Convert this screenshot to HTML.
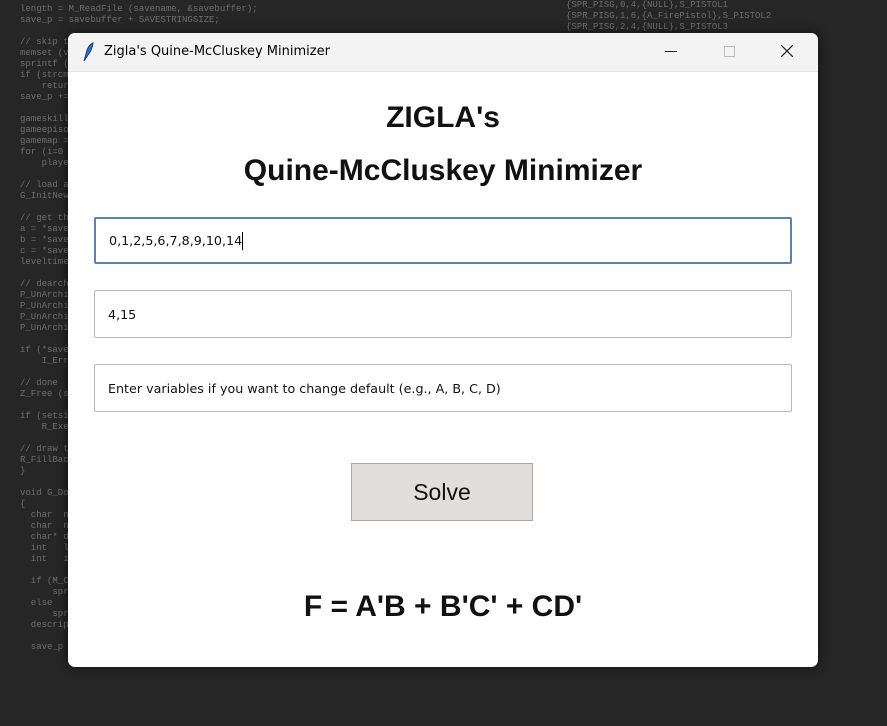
<!DOCTYPE html>
<html><head><meta charset="utf-8"><style>
body{margin:0;width:887px;height:726px;overflow:hidden;background:#262626;font-family:"Liberation Sans",sans-serif;position:relative}
.bg{position:absolute;font-family:"Liberation Mono",monospace;font-size:9px;color:#6e6e6e;line-height:11px;white-space:pre}
.win{position:absolute;left:68px;top:33px;width:750px;height:634px;background:#fff;border-radius:7px;overflow:hidden;box-shadow:0 0 10px rgba(0,0,0,.6);font-family:"Liberation Sans",sans-serif}
.tb{position:absolute;left:0;top:0;width:750px;height:38px;background:#f3f3f3;border-bottom:1px solid #e5e5e5}
.tt{position:absolute;left:36px;top:11px;color:#000;font-family:"DejaVu Sans",sans-serif;font-size:13px}
.h{position:absolute;left:0;width:100%;text-align:center;font-weight:bold;font-size:30px;color:#111;font-family:"Liberation Sans",sans-serif}
.in{position:absolute;left:26px;width:698px;background:#fff;border:1px solid #b8b8b8;border-radius:2px;color:#111;padding-left:13px;box-sizing:border-box;display:flex;align-items:center;font-family:"DejaVu Sans",sans-serif;font-size:12.7px}
.btn{position:absolute;left:283px;top:430px;width:182px;height:58px;background:#e1dfdb;border:1px solid #a9a9a9;box-sizing:border-box;text-align:center;line-height:56px;font-size:23px;color:#111;font-family:"Liberation Sans",sans-serif}
</style></head><body>
<div class="bg" style="left:20px;top:4px">length = M_ReadFile (savename, &amp;savebuffer);
save_p = savebuffer + SAVESTRINGSIZE;

// skip the description field
memset (vcheck,0,sizeof(vcheck));
sprintf (vcheck,"version %i",VERSION);
if (strcmp (save_p, vcheck))
    return;
save_p += VERSIONSIZE;

gameskill = *save_p++;
gameepisode = *save_p++;
gamemap = *save_p++;
for (i=0 ; i&lt;MAXPLAYERS ; i++)
    playeringame[i] = *save_p++;

// load a base level
G_InitNew (gameskill, gameepisode, gamemap);

// get the times
a = *save_p++;
b = *save_p++;
c = *save_p++;
leveltime = (a&lt;&lt;16) + (b&lt;&lt;8) + c;

// dearchive all the modifications
P_UnArchivePlayers ();
P_UnArchiveWorld ();
P_UnArchiveThinkers ();
P_UnArchiveSpecials ();

if (*save_p != 0x1d)
    I_Error ("Bad savegame");

// done
Z_Free (savebuffer);

if (setsizeneeded)
    R_ExecuteSetViewSize ();

// draw the pattern into the back screen
R_FillBackScreen ();
}

void G_DoSaveGame (void)
{
  char  name[100];
  char  name2[100];
  char* description;
  int   length;
  int   i;

  if (M_CheckParm("-cdrom"))
      sprintf(name,...);
  else
      sprintf (name,...);
  description = savedescription;

  save_p = savebuffer = screens[1]+0x4000;</div>
<div class="bg" style="left:566px;top:0px">{SPR_PISG,0,4,{NULL},S_PISTOL1
{SPR_PISG,1,6,{A_FirePistol},S_PISTOL2
{SPR_PISG,2,4,{NULL},S_PISTOL3








            S_SGUNFLASH1
            S_SGUNFLASH2
            DOWN
            UP

            S_DSGUN2

            S_DSGUN5

            S_DSGUN7

            S_DSGUN9</div>
<div class="win">
 <div class="tb">
  <svg style="position:absolute;left:13px;top:9px" width="14" height="20" viewBox="0 0 14 20"><path d="M3 19 L5 12 Q7 3 12 1 Q11 8 7 13 Z" fill="#3a6fd0" stroke="#1b3a78" stroke-width="1"/></svg>
  <div class="tt">Zigla's Quine-McCluskey Minimizer</div>
  <div style="position:absolute;left:597px;top:18px;width:12px;height:1px;background:#222"></div>
  <div style="position:absolute;left:656px;top:13px;width:9px;height:9px;border:1px solid #bbb"></div>
  <svg style="position:absolute;left:713px;top:12px" width="12" height="12"><path d="M0 0L12 12M12 0L0 12" stroke="#222" stroke-width="1.2"/></svg>
 </div>
 <div class="h" style="top:68px">ZIGLA's</div>
 <div class="h" style="top:121px">Quine-McCluskey Minimizer</div>
 <div class="in" style="top:184px;height:47px;border:2px solid #5c82ad">0,1,2,5,6,7,8,9,10,14<span style="display:inline-block;width:1px;height:18px;background:#000"></span></div>
 <div class="in" style="top:257px;height:48px">4,15</div>
 <div class="in" style="top:331px;height:48px">Enter variables if you want to change default (e.g., A, B, C, D)</div>
 <div class="btn">Solve</div>
 <div class="h" style="top:557px">F = A'B + B'C' + CD'</div>
</div>
</body></html>
